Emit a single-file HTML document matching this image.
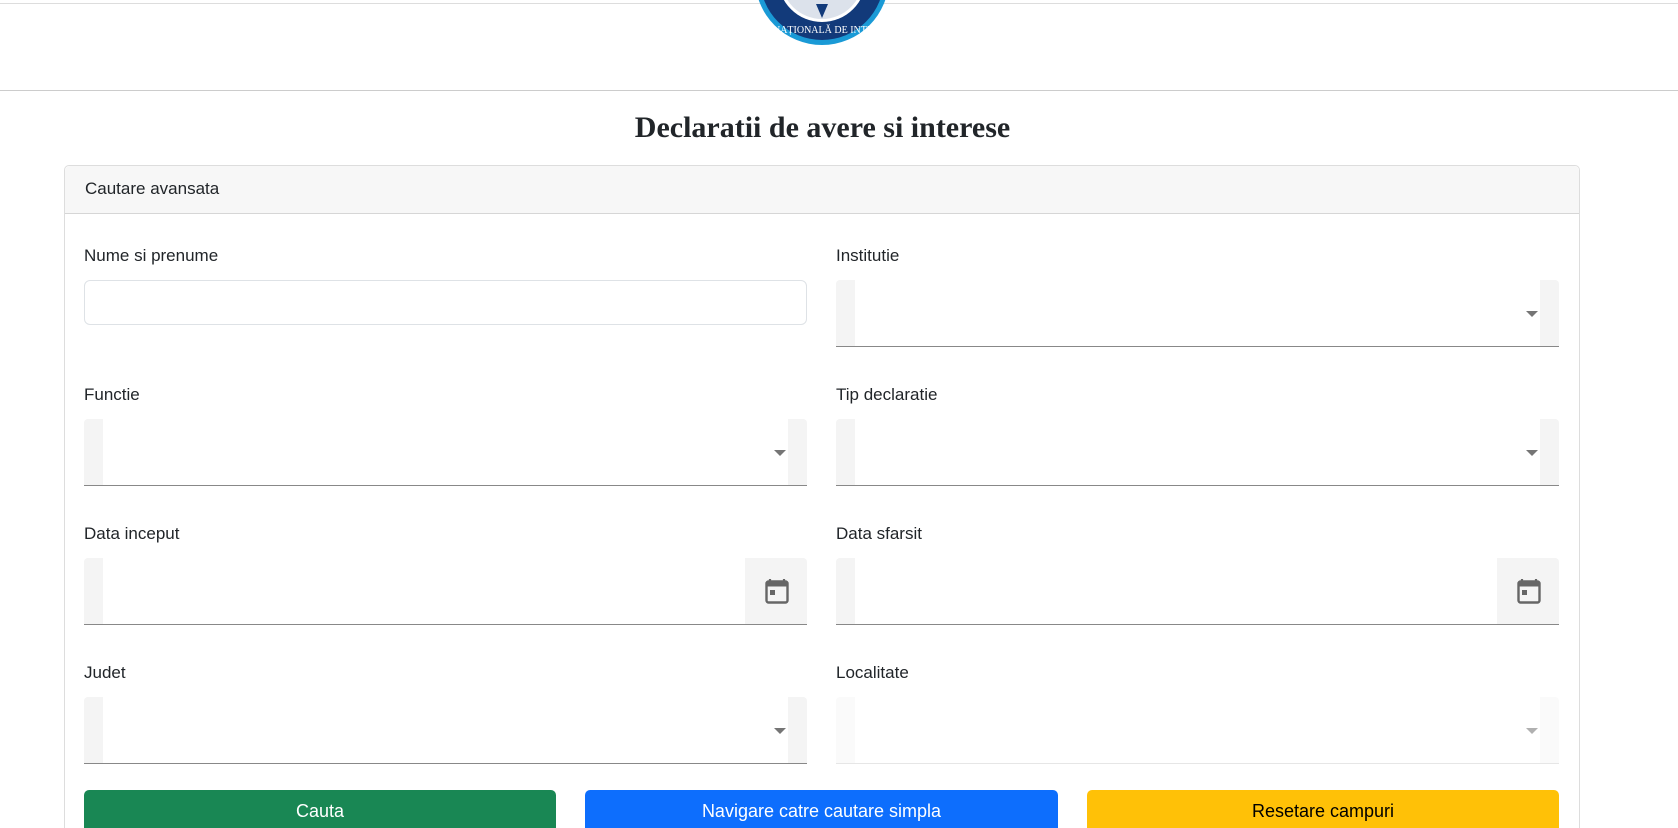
<!DOCTYPE html>
<html><head><meta charset="utf-8"><style>
*{box-sizing:border-box;margin:0;padding:0}
html,body{width:1678px;height:828px;overflow:hidden}
body{background:#fff;font-family:"Liberation Sans",Arial,sans-serif;color:#212529;position:relative}
.abs{position:absolute}
.lbl{position:absolute;font-size:17px;line-height:20px}
.sel{position:absolute;height:67px;border-bottom:1px solid #888;background:#fff}
.sel .l{position:absolute;left:0;top:0;bottom:0;width:19px;background:#f4f4f4;border-top-left-radius:4px}
.sel .r{position:absolute;right:0;top:0;bottom:0;width:19px;background:#f4f4f4;border-top-right-radius:4px}
.sel .ar{position:absolute;right:21px;top:31px;width:0;height:0;border-left:6px solid transparent;border-right:6px solid transparent;border-top:6px solid #757575}
.sel.dis{border-bottom-color:#e6e6e6}
.sel.dis .l,.sel.dis .r{background:#fafafa}
.sel.dis .ar{border-top-color:#b0b0b0}
.sel .cal{position:absolute;right:0;top:0;bottom:0;width:62px;background:#f4f4f4;border-top-right-radius:4px}
.btn{position:absolute;top:790px;height:38px;border-radius:5px 5px 0 0;color:#fff;font-size:18px;text-align:center;padding-top:10px;line-height:22px}
</style></head><body>
<div class="abs" style="left:0;top:3px;width:1678px;height:1px;background:#ddd"></div>
<svg class="abs" style="left:752px;top:0" width="140" height="48" viewBox="0 0 140 48">
<circle cx="70" cy="-22" r="67" fill="#1a9ad6"/>
<circle cx="70" cy="-22" r="62" fill="#123a7a"/>
<circle cx="70" cy="-22" r="44" fill="#fff"/>
<circle cx="70" cy="-22" r="41" fill="#123a7a" opacity="0.15"/>
<polygon points="64,4 76,4 70,18" fill="#123a7a"/>
<text x="70" y="33" font-size="10" fill="#fff" text-anchor="middle" font-family="Liberation Serif">A NAȚIONALĂ DE INTEG</text>
</svg>
<div class="abs" style="left:0;top:90px;width:1678px;height:1px;background:#ccc"></div>
<div class="abs" style="left:0;top:110px;width:1645px;text-align:center;font-family:'Liberation Serif',serif;font-weight:bold;font-size:30px;line-height:36px;color:#212529">Declaratii de avere si interese</div>
<div class="abs" style="left:64px;top:165px;width:1516px;height:663px;border:1px solid #ddd;border-bottom:none;border-radius:5px 5px 0 0"></div>
<div class="abs" style="left:65px;top:166px;width:1514px;height:48px;background:#f7f7f7;border-bottom:1px solid #d6d6d6;border-radius:5px 5px 0 0"></div>
<div class="lbl" style="left:85px;top:179px">Cautare avansata</div>

<div class="lbl" style="left:84px;top:246px">Nume si prenume</div>
<div class="abs" style="left:84px;top:280px;width:723px;height:45px;border:1px solid #dee2e6;border-radius:6px"></div>
<div class="lbl" style="left:836px;top:246px">Institutie</div>
<div class="sel" style="left:836px;top:280px;width:723px"><div class="l"></div><div class="r"></div><div class="ar"></div></div>

<div class="lbl" style="left:84px;top:385px">Functie</div>
<div class="sel" style="left:84px;top:419px;width:723px"><div class="l"></div><div class="r"></div><div class="ar"></div></div>
<div class="lbl" style="left:836px;top:385px">Tip declaratie</div>
<div class="sel" style="left:836px;top:419px;width:723px"><div class="l"></div><div class="r"></div><div class="ar"></div></div>

<div class="lbl" style="left:84px;top:524px">Data inceput</div>
<div class="sel" style="left:84px;top:558px;width:723px"><div class="l"></div><div class="cal"><svg style="position:absolute;left:20px;top:20px" width="24" height="26" viewBox="0 0 24 26"><path d="M5 1v3M19 1v3" stroke="#666" stroke-width="2.2"/><rect x="1.5" y="3.5" width="21" height="21" rx="2" fill="none" stroke="#666" stroke-width="2.4"/><rect x="1.5" y="3.5" width="21" height="5" fill="#666"/><rect x="5" y="12" width="5" height="5" fill="#666"/></svg></div></div>
<div class="lbl" style="left:836px;top:524px">Data sfarsit</div>
<div class="sel" style="left:836px;top:558px;width:723px"><div class="l"></div><div class="cal"><svg style="position:absolute;left:20px;top:20px" width="24" height="26" viewBox="0 0 24 26"><path d="M5 1v3M19 1v3" stroke="#666" stroke-width="2.2"/><rect x="1.5" y="3.5" width="21" height="21" rx="2" fill="none" stroke="#666" stroke-width="2.4"/><rect x="1.5" y="3.5" width="21" height="5" fill="#666"/><rect x="5" y="12" width="5" height="5" fill="#666"/></svg></div></div>

<div class="lbl" style="left:84px;top:663px">Judet</div>
<div class="sel" style="left:84px;top:697px;width:723px"><div class="l"></div><div class="r"></div><div class="ar"></div></div>
<div class="lbl" style="left:836px;top:663px">Localitate</div>
<div class="sel dis" style="left:836px;top:697px;width:723px"><div class="l"></div><div class="r"></div><div class="ar"></div></div>

<div class="btn" style="left:84px;width:472px;background:#198754">Cauta</div>
<div class="btn" style="left:585px;width:473px;background:#0d6efd">Navigare catre cautare simpla</div>
<div class="btn" style="left:1087px;width:472px;background:#ffc107;color:#000">Resetare campuri</div>
</body></html>
